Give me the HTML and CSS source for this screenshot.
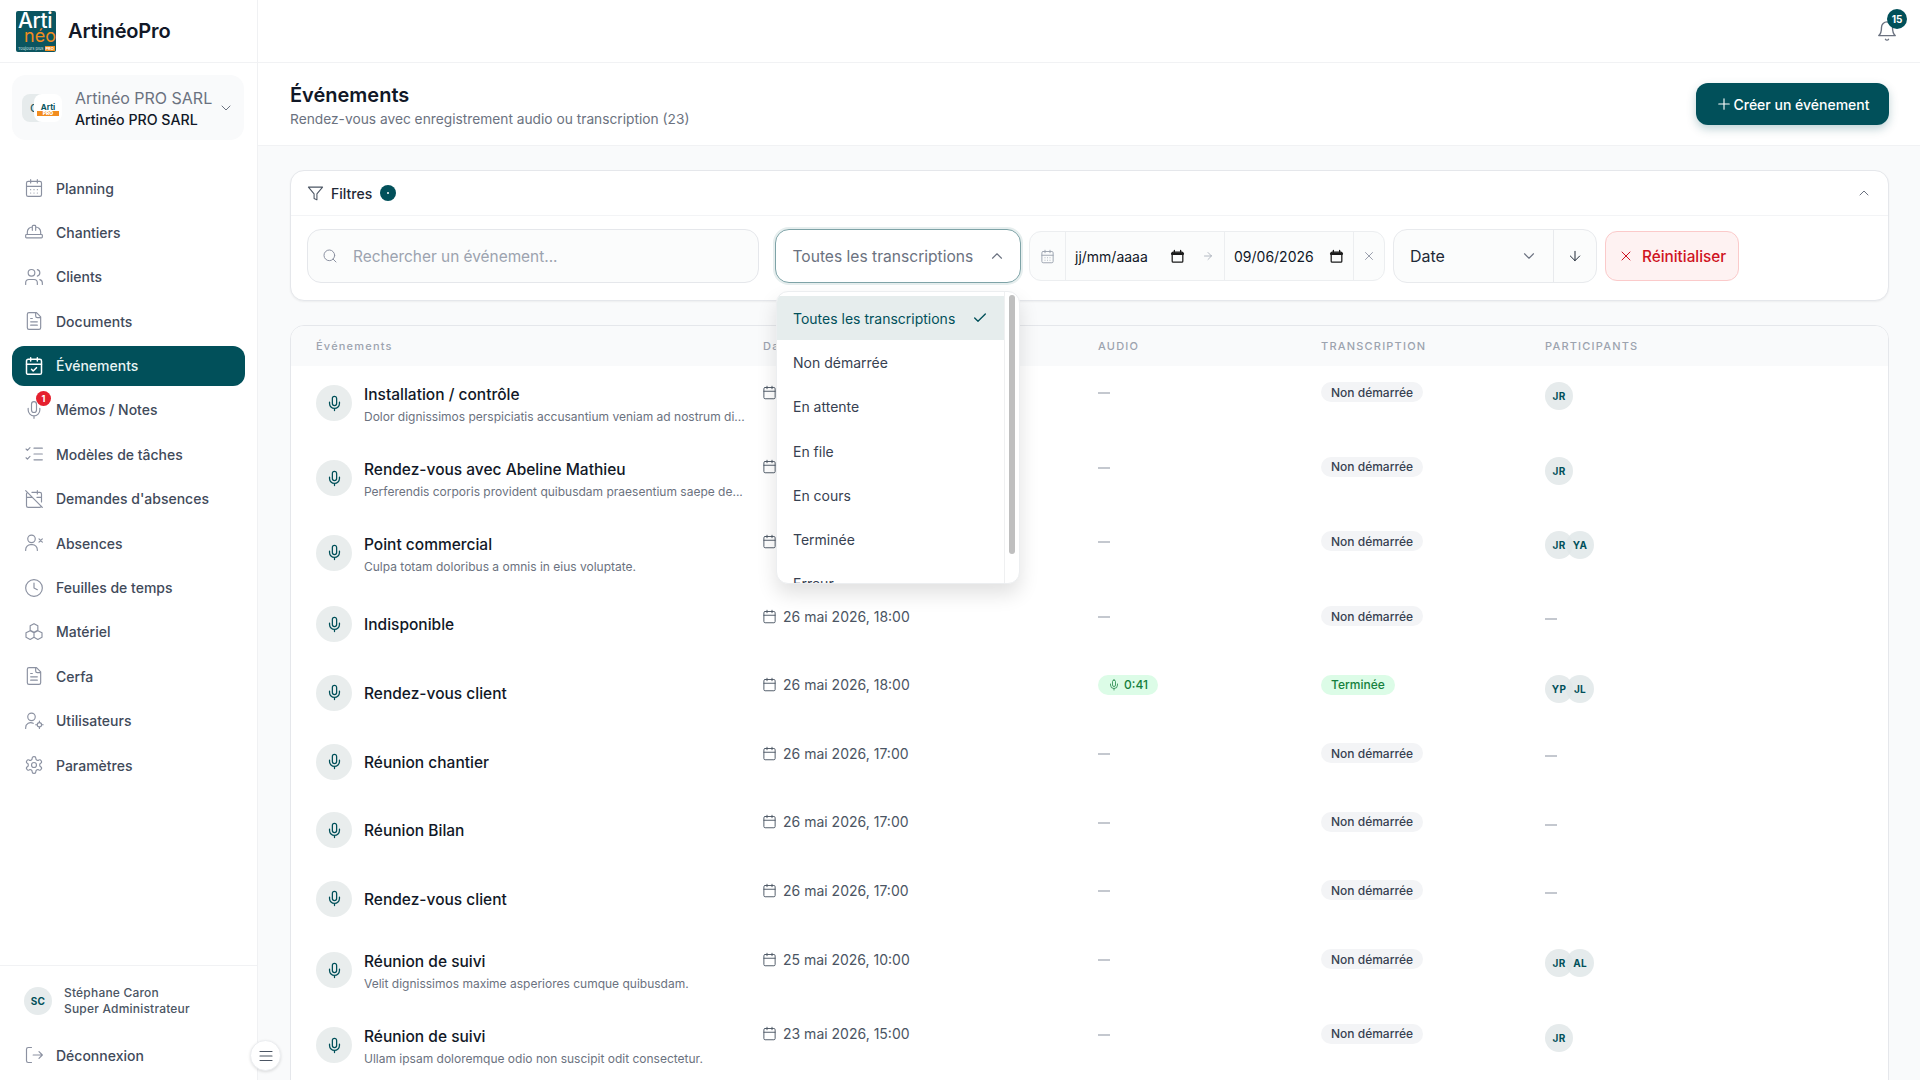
FILE: index.html
```html
<!DOCTYPE html>
<html lang="fr">
<head>
  <meta charset="UTF-8">
  <title>ArtinéoPro - Événements</title>
  <link rel="stylesheet" href="styles.css">
</head>
<body>
  <!-- icon sprite -->
  <svg class="sprite" xmlns="http://www.w3.org/2000/svg">
    <symbol id="i-calendar" viewBox="0 0 24 24"><rect x="3" y="4" width="18" height="18" rx="2"/><path d="M16 2v4M8 2v4M3 10h18"/></symbol>
    <symbol id="i-calendar-days" viewBox="0 0 24 24"><rect x="3" y="4" width="18" height="18" rx="2"/><path d="M16 2v4M8 2v4M3 10h18M8 14h.01M12 14h.01M16 14h.01M8 18h.01M12 18h.01M16 18h.01"/></symbol>
    <symbol id="i-calendar-check" viewBox="0 0 24 24"><rect x="3" y="4" width="18" height="18" rx="2"/><path d="M16 2v4M8 2v4M3 10h18M9 16l2 2 4-4"/></symbol>
    <symbol id="i-calendar-off" viewBox="0 0 24 24"><path d="M4.2 4.2A2 2 0 0 0 3 6v14a2 2 0 0 0 2 2h14a2 2 0 0 0 1.82-1.18M21 15.5V6a2 2 0 0 0-2-2H9.5M16 2v4M3 10h7M21 10h-5.5M2 2l20 20"/></symbol>
    <symbol id="i-helmet" viewBox="0 0 24 24"><path d="M10 10V5a1 1 0 0 1 1-1h2a1 1 0 0 1 1 1v5M14 6a6 6 0 0 1 6 6v3M4 15v-3a6 6 0 0 1 6-6"/><rect x="2" y="15" width="20" height="4" rx="1"/></symbol>
    <symbol id="i-users" viewBox="0 0 24 24"><circle cx="9" cy="7" r="4"/><path d="M2 21v-2a4 4 0 0 1 4-4h6a4 4 0 0 1 4 4v2M16 3.13a4 4 0 0 1 0 7.75M22 21v-2a4 4 0 0 0-3-3.87"/></symbol>
    <symbol id="i-file" viewBox="0 0 24 24"><path d="M15 2H6a2 2 0 0 0-2 2v16a2 2 0 0 0 2 2h12a2 2 0 0 0 2-2V7ZM14 2v4a2 2 0 0 0 2 2h4M10 9H8M16 13H8M16 17H8"/></symbol>
    <symbol id="i-mic" viewBox="0 0 24 24"><path d="M12 2a3 3 0 0 0-3 3v7a3 3 0 0 0 6 0V5a3 3 0 0 0-3-3ZM19 10v2a7 7 0 0 1-14 0v-2M12 19v3"/></symbol>
    <symbol id="i-tasks" viewBox="0 0 24 24"><path d="M2.5 6l1.6 1.6L7.2 4.4M2.5 16.5l1.6 1.6 3.1-3.2M12 5h10M12 12h10M12 19h10"/></symbol>
    <symbol id="i-user-x" viewBox="0 0 24 24"><circle cx="9" cy="7" r="4.5"/><path d="M2 21v-1a6 6 0 0 1 6-6h2a6 6 0 0 1 6 6v1M18 7l4 4M22 7l-4 4"/></symbol>
    <symbol id="i-clock" viewBox="0 0 24 24"><circle cx="12" cy="12" r="10"/><path d="M12 6v6l4 2"/></symbol>
    <symbol id="i-boxes" viewBox="0 0 24 24"><path d="M12 2l4.6 2.6v5.2L12 12.4 7.4 9.8V4.6ZM7.4 10.4l4.6 2.6v5.4L7.4 21 2.4 18.4V13ZM16.6 10.4L21.6 13v5.4L16.6 21 12 18.4V13Z"/></symbol>
    <symbol id="i-user-cog" viewBox="0 0 24 24"><circle cx="9" cy="7" r="4.5"/><path d="M2 21v-1a6 6 0 0 1 9-5.2"/><circle cx="18.5" cy="16.5" r="2.6"/><path d="M18.5 12v1.4M18.5 19.6V21M14 16.5h1.4M21.6 16.5H23"/></symbol>
    <symbol id="i-settings" viewBox="0 0 24 24"><path d="M12.22 2h-.44a2 2 0 0 0-2 2v.18a2 2 0 0 1-1 1.73l-.43.25a2 2 0 0 1-2 0l-.15-.08a2 2 0 0 0-2.73.73l-.22.38a2 2 0 0 0 .73 2.73l.15.1a2 2 0 0 1 1 1.72v.51a2 2 0 0 1-1 1.74l-.15.09a2 2 0 0 0-.73 2.73l.22.38a2 2 0 0 0 2.73.73l.15-.08a2 2 0 0 1 2 0l.43.25a2 2 0 0 1 1 1.73V20a2 2 0 0 0 2 2h.44a2 2 0 0 0 2-2v-.18a2 2 0 0 1 1-1.73l.43-.25a2 2 0 0 1 2 0l.15.08a2 2 0 0 0 2.73-.73l.22-.39a2 2 0 0 0-.73-2.73l-.15-.08a2 2 0 0 1-1-1.74v-.5a2 2 0 0 1 1-1.74l.15-.09a2 2 0 0 0 .73-2.73l-.22-.38a2 2 0 0 0-2.73-.73l-.15.08a2 2 0 0 1-2 0l-.43-.25a2 2 0 0 1-1-1.73V4a2 2 0 0 0-2-2z"/><circle cx="12" cy="12" r="3"/></symbol>
    <symbol id="i-logout" viewBox="0 0 24 24"><path d="M9 21H5a2 2 0 0 1-2-2V5a2 2 0 0 1 2-2h4M11 12h11M18 8l4 4-4 4"/></symbol>
    <symbol id="i-bell" viewBox="0 0 24 24"><path d="M6 8a6 6 0 0 1 12 0c0 7 3 9 3 9H3s3-2 3-9M10.3 21a1.94 1.94 0 0 0 3.4 0"/></symbol>
    <symbol id="i-filter" viewBox="0 0 24 24"><path d="M22 3H2l8 9.46V19l4 2v-8.54Z"/></symbol>
    <symbol id="i-search" viewBox="0 0 24 24"><circle cx="11" cy="11" r="8"/><path d="M21 21l-4.3-4.3"/></symbol>
    <symbol id="i-chevron-down" viewBox="0 0 24 24"><path d="M6 9l6 6 6-6"/></symbol>
    <symbol id="i-chevron-up" viewBox="0 0 24 24"><path d="M18 15l-6-6-6 6"/></symbol>
    <symbol id="i-x" viewBox="0 0 24 24"><path d="M18 6L6 18M6 6l12 12"/></symbol>
    <symbol id="i-plus" viewBox="0 0 24 24"><path d="M5 12h14M12 5v14"/></symbol>
    <symbol id="i-arrow-right" viewBox="0 0 24 24"><path d="M5 12h14M12 5l7 7-7 7"/></symbol>
    <symbol id="i-arrow-down" viewBox="0 0 24 24"><path d="M12 5v14M19 12l-7 7-7-7"/></symbol>
    <symbol id="i-check" viewBox="0 0 24 24"><path d="M20 6L9 17l-5-5"/></symbol>
    <symbol id="i-menu" viewBox="0 0 24 24"><path d="M4 6h16M4 12h16M4 18h16"/></symbol>
    <symbol id="i-picker" viewBox="0 0 24 24"><path d="M7 2v3M17 2v3"/><rect x="3.5" y="5" width="17" height="16" rx="1.5"/><path d="M3.5 7.5h17" stroke-width="4"/></symbol>
  </svg>

  <div class="app">
    <!-- Sidebar -->
    <aside class="sidebar">
      <div class="brand">
        <div class="logo">
          <span class="logo-arti">Arti</span>
          <span class="logo-neo">néo</span>
          <span class="logo-foot">Toujours plus <b>PRO</b></span>
        </div>
        <span class="brand-name">ArtinéoPro</span>
      </div>

      <div class="company">
        <div class="company-logos">
          <span class="tile tile-back">d</span>
          <span class="tile tile-front"><i>Arti</i><b>PRO</b></span>
        </div>
        <div class="company-text">
          <div class="company-top">Artinéo PRO SARL</div>
          <div class="company-sub">Artinéo PRO SARL</div>
        </div>
        <svg class="icon company-chev"><use href="#i-chevron-down"/></svg>
      </div>

      <nav class="nav">
        <a class="nav-item"><svg class="icon"><use href="#i-calendar-days"/></svg>Planning</a>
        <a class="nav-item"><svg class="icon"><use href="#i-helmet"/></svg>Chantiers</a>
        <a class="nav-item"><svg class="icon"><use href="#i-users"/></svg>Clients</a>
        <a class="nav-item"><svg class="icon"><use href="#i-file"/></svg>Documents</a>
        <a class="nav-item active"><svg class="icon"><use href="#i-calendar-check"/></svg>Événements</a>
        <a class="nav-item"><span class="nav-icon"><svg class="icon"><use href="#i-mic"/></svg><span class="nav-badge">1</span></span>Mémos / Notes</a>
        <a class="nav-item"><svg class="icon"><use href="#i-tasks"/></svg>Modèles de tâches</a>
        <a class="nav-item"><svg class="icon"><use href="#i-calendar-off"/></svg>Demandes d'absences</a>
        <a class="nav-item"><svg class="icon"><use href="#i-user-x"/></svg>Absences</a>
        <a class="nav-item"><svg class="icon"><use href="#i-clock"/></svg>Feuilles de temps</a>
        <a class="nav-item"><svg class="icon"><use href="#i-boxes"/></svg>Matériel</a>
        <a class="nav-item"><svg class="icon"><use href="#i-file"/></svg>Cerfa</a>
        <a class="nav-item"><svg class="icon"><use href="#i-user-cog"/></svg>Utilisateurs</a>
        <a class="nav-item"><svg class="icon"><use href="#i-settings"/></svg>Paramètres</a>
      </nav>

      <div class="side-foot">
        <div class="me">
          <span class="avatar">SC</span>
          <div class="me-text">
            <div>Stéphane Caron</div>
            <div>Super Administrateur</div>
          </div>
        </div>
        <a class="nav-item"><svg class="icon"><use href="#i-logout"/></svg>Déconnexion</a>
      </div>
      <button class="collapse"><svg class="icon"><use href="#i-menu"/></svg></button>
    </aside>

    <!-- Main -->
    <div class="main">
      <header class="topbar">
        <div class="bell">
          <svg class="icon"><use href="#i-bell"/></svg>
          <span class="bell-badge">15</span>
        </div>
      </header>

      <section class="page-head">
        <div>
          <h1 class="page-title">Événements</h1>
          <p class="page-sub">Rendez-vous avec enregistrement audio ou transcription (23)</p>
        </div>
        <button class="btn-create"><svg class="icon"><use href="#i-plus"/></svg>Créer un événement</button>
      </section>

      <div class="content">
        <section class="filters">
          <div class="filters-head">
            <svg class="icon filter-icon"><use href="#i-filter"/></svg>
            <span class="filters-label">Filtres</span>
            <span class="filters-dot"></span>
            <svg class="icon filters-chev"><use href="#i-chevron-up"/></svg>
          </div>
          <div class="filters-row">
            <div class="search">
              <svg class="icon"><use href="#i-search"/></svg>
              <span>Rechercher un événement...</span>
            </div>

            <div class="select-wrap">
              <div class="select-open">
                <span>Toutes les transcriptions</span>
                <svg class="icon"><use href="#i-chevron-up"/></svg>
              </div>
              <div class="dropdown">
                <ul class="dropdown-list">
                  <li class="option selected">Toutes les transcriptions<svg class="icon"><use href="#i-check"/></svg></li>
                  <li class="option">Non démarrée</li>
                  <li class="option">En attente</li>
                  <li class="option">En file</li>
                  <li class="option">En cours</li>
                  <li class="option">Terminée</li>
                  <li class="option">Erreur</li>
                </ul>
                <div class="scrolltrack"><div class="scrollthumb"></div></div>
              </div>
            </div>

            <div class="dates">
              <span class="dates-icon"><svg class="icon"><use href="#i-calendar-days"/></svg></span>
              <span class="date-field date-from">jj/mm/aaaa<svg class="icon picker"><use href="#i-picker"/></svg><svg class="icon date-arrow"><use href="#i-arrow-right"/></svg></span>
              <span class="date-field date-to">09/06/2026<svg class="icon picker"><use href="#i-picker"/></svg></span>
              <span class="dates-clear"><svg class="icon"><use href="#i-x"/></svg></span>
            </div>

            <div class="sort">
              <span class="sort-field">Date<svg class="icon"><use href="#i-chevron-down"/></svg></span>
              <span class="sort-dir"><svg class="icon"><use href="#i-arrow-down"/></svg></span>
            </div>

            <button class="btn-reset"><svg class="icon"><use href="#i-x"/></svg>Réinitialiser</button>
          </div>
        </section>

        <section class="table-card">
          <table class="events">
            <colgroup>
              <col class="col-event"><col class="col-date"><col class="col-audio"><col class="col-trans"><col>
            </colgroup>
            <thead>
              <tr>
                <th class="th-plain">Événements</th>
                <th class="th-plain">Date</th>
                <th>Audio</th>
                <th>Transcription</th>
                <th>Participants</th>
              </tr>
            </thead>
            <tbody>
              <tr class="has-sub">
                <td><div class="ev"><span class="ev-mic"><svg class="icon"><use href="#i-mic"/></svg></span><div class="ev-text"><div class="ev-title">Installation / contrôle</div><div class="ev-sub">Dolor dignissimos perspiciatis accusantium veniam ad nostrum di...</div></div></div></td>
                <td><span class="when"><svg class="icon"><use href="#i-calendar"/></svg>27 mai 2026, 09:00</span></td>
                <td><span class="dash"></span></td>
                <td><span class="pill">Non démarrée</span></td>
                <td><div class="people"><span class="avatar">JR</span></div></td>
              </tr>
              <tr class="has-sub">
                <td><div class="ev"><span class="ev-mic"><svg class="icon"><use href="#i-mic"/></svg></span><div class="ev-text"><div class="ev-title">Rendez-vous avec Abeline Mathieu</div><div class="ev-sub">Perferendis corporis provident quibusdam praesentium saepe de...</div></div></div></td>
                <td><span class="when"><svg class="icon"><use href="#i-calendar"/></svg>27 mai 2026, 08:00</span></td>
                <td><span class="dash"></span></td>
                <td><span class="pill">Non démarrée</span></td>
                <td><div class="people"><span class="avatar">JR</span></div></td>
              </tr>
              <tr class="has-sub">
                <td><div class="ev"><span class="ev-mic"><svg class="icon"><use href="#i-mic"/></svg></span><div class="ev-text"><div class="ev-title">Point commercial</div><div class="ev-sub">Culpa totam doloribus a omnis in eius voluptate.</div></div></div></td>
                <td><span class="when"><svg class="icon"><use href="#i-calendar"/></svg>26 mai 2026, 18:00</span></td>
                <td><span class="dash"></span></td>
                <td><span class="pill">Non démarrée</span></td>
                <td><div class="people"><span class="avatar">JR</span><span class="avatar">YA</span></div></td>
              </tr>
              <tr>
                <td><div class="ev"><span class="ev-mic"><svg class="icon"><use href="#i-mic"/></svg></span><div class="ev-text"><div class="ev-title">Indisponible</div></div></div></td>
                <td><span class="when"><svg class="icon"><use href="#i-calendar"/></svg>26 mai 2026, 18:00</span></td>
                <td><span class="dash"></span></td>
                <td><span class="pill">Non démarrée</span></td>
                <td><div class="people"><span class="dash"></span></div></td>
              </tr>
              <tr>
                <td><div class="ev"><span class="ev-mic"><svg class="icon"><use href="#i-mic"/></svg></span><div class="ev-text"><div class="ev-title">Rendez-vous client</div></div></div></td>
                <td><span class="when"><svg class="icon"><use href="#i-calendar"/></svg>26 mai 2026, 18:00</span></td>
                <td><span class="pill pill-green"><svg class="icon"><use href="#i-mic"/></svg>0:41</span></td>
                <td><span class="pill pill-green">Terminée</span></td>
                <td><div class="people"><span class="avatar">YP</span><span class="avatar">JL</span></div></td>
              </tr>
              <tr>
                <td><div class="ev"><span class="ev-mic"><svg class="icon"><use href="#i-mic"/></svg></span><div class="ev-text"><div class="ev-title">Réunion chantier</div></div></div></td>
                <td><span class="when"><svg class="icon"><use href="#i-calendar"/></svg>26 mai 2026, 17:00</span></td>
                <td><span class="dash"></span></td>
                <td><span class="pill">Non démarrée</span></td>
                <td><div class="people"><span class="dash"></span></div></td>
              </tr>
              <tr>
                <td><div class="ev"><span class="ev-mic"><svg class="icon"><use href="#i-mic"/></svg></span><div class="ev-text"><div class="ev-title">Réunion Bilan</div></div></div></td>
                <td><span class="when"><svg class="icon"><use href="#i-calendar"/></svg>26 mai 2026, 17:00</span></td>
                <td><span class="dash"></span></td>
                <td><span class="pill">Non démarrée</span></td>
                <td><div class="people"><span class="dash"></span></div></td>
              </tr>
              <tr>
                <td><div class="ev"><span class="ev-mic"><svg class="icon"><use href="#i-mic"/></svg></span><div class="ev-text"><div class="ev-title">Rendez-vous client</div></div></div></td>
                <td><span class="when"><svg class="icon"><use href="#i-calendar"/></svg>26 mai 2026, 17:00</span></td>
                <td><span class="dash"></span></td>
                <td><span class="pill">Non démarrée</span></td>
                <td><div class="people"><span class="dash"></span></div></td>
              </tr>
              <tr class="has-sub">
                <td><div class="ev"><span class="ev-mic"><svg class="icon"><use href="#i-mic"/></svg></span><div class="ev-text"><div class="ev-title">Réunion de suivi</div><div class="ev-sub">Velit dignissimos maxime asperiores cumque quibusdam.</div></div></div></td>
                <td><span class="when"><svg class="icon"><use href="#i-calendar"/></svg>25 mai 2026, 10:00</span></td>
                <td><span class="dash"></span></td>
                <td><span class="pill">Non démarrée</span></td>
                <td><div class="people"><span class="avatar">JR</span><span class="avatar">AL</span></div></td>
              </tr>
              <tr class="has-sub">
                <td><div class="ev"><span class="ev-mic"><svg class="icon"><use href="#i-mic"/></svg></span><div class="ev-text"><div class="ev-title">Réunion de suivi</div><div class="ev-sub">Ullam ipsam doloremque odio non suscipit odit consectetur.</div></div></div></td>
                <td><span class="when"><svg class="icon"><use href="#i-calendar"/></svg>23 mai 2026, 15:00</span></td>
                <td><span class="dash"></span></td>
                <td><span class="pill">Non démarrée</span></td>
                <td><div class="people"><span class="avatar">JR</span></div></td>
              </tr>
            </tbody>
          </table>
        </section>
      </div>
    </div>
  </div>
</body>
</html>
```

FILE: styles.css
```css
* {
  box-sizing: border-box;
}

html, body {
  margin: 0;
  height: 100%;
  overflow: hidden;
}

body {
  font-family: Inter, "Liberation Sans", sans-serif;
  color: #111827;
  background: #fff;
}

.sprite {
  display: none;
}

.icon {
  width: 20px;
  height: 20px;
  fill: none;
  stroke: currentColor;
  stroke-width: 1.5;
  stroke-linecap: round;
  stroke-linejoin: round;
  flex-shrink: 0;
}

.app {
  display: grid;
  grid-template-columns: 258px 1fr;
  height: 1080px;
}

/* Sidebar */
.sidebar {
  position: relative;
  display: flex;
  flex-direction: column;
  border-right: 1px solid #f0f1f3;
  background: #fff;
  z-index: 2;
}

.brand {
  display: flex;
  align-items: center;
  gap: 12px;
  height: 63px;
  padding-left: 16px;
  border-bottom: 1px solid #f1f2f4;
}

.logo {
  position: relative;
  width: 40px;
  height: 41px;
  border-radius: 2px;
  background: #0b5560;
  font-weight: 500;
}

.logo-arti {
  position: absolute;
  left: 2px;
  top: 1.5px;
  font-size: 21px;
  line-height: 18px;
  letter-spacing: -0.4px;
  color: #fff;
}

.logo-neo {
  position: absolute;
  left: 8px;
  top: 19.5px;
  font-size: 18px;
  line-height: 12px;
  font-weight: 400;
  color: #f28c1e;
}

.logo-foot {
  position: absolute;
  left: 2px;
  bottom: 1px;
  font-size: 4px;
  line-height: 5px;
  font-weight: 400;
  color: #d5e3e5;
  white-space: nowrap;
}

.logo-foot b {
  background: #f28c1e;
  color: #fff;
  padding: 0 1px;
}

.brand-name {
  font-size: 20px;
  font-weight: 600;
  color: #111827;
  letter-spacing: -0.15px;
}

.company {
  display: flex;
  align-items: center;
  height: 65px;
  margin: 12px 13px 0 12px;
  padding: 0 10px;
  border-radius: 14px;
  background: #f9fafb;
}

.company-logos {
  position: relative;
  width: 42px;
  height: 28px;
  margin-right: 11px;
  flex-shrink: 0;
}

.tile {
  position: absolute;
  top: 0;
  width: 28px;
  height: 28px;
  border-radius: 8px;
}

.tile-back {
  left: 0;
  background: #e6ebec;
  color: #285a60;
  font-size: 14px;
  padding: 4px 0 0 8px;
}

.tile-front {
  left: 12px;
  background: #fff;
  font-size: 8px;
  font-weight: 700;
  text-align: center;
  line-height: 1;
  padding-top: 9px;
}

.tile-front i {
  display: block;
  font-style: normal;
  color: #0b5560;
}

.tile-front b {
  display: block;
  font-size: 5px;
  background: #f28c1e;
  color: #fff;
  margin: 0 3px;
}

.company-text {
  flex: 1;
  min-width: 0;
  padding-top: 2px;
  white-space: nowrap;
}

.company-top {
  font-size: 16px;
  line-height: 21px;
  color: #6b7280;
}

.company-sub {
  font-size: 14.2px;
  line-height: 21px;
  font-weight: 500;
  color: #111827;
}

.company-chev {
  width: 16px;
  height: 16px;
  color: #6b7280;
}

.nav {
  display: flex;
  flex-direction: column;
  gap: 4.4px;
  margin-top: 28px;
  padding: 0 12px;
}

.nav-item {
  display: flex;
  align-items: center;
  gap: 12px;
  height: 40px;
  padding-left: 12px;
  border-radius: 12px;
  font-size: 14px;
  font-weight: 500;
  color: #414a5a;
}

.nav-item .icon {
  width: 20px;
  height: 20px;
  color: #8b91a1;
  stroke-width: 1.4;
}

.nav-item.active {
  background: #01505a;
  color: #e8f4f4;
}

.nav-item.active .icon {
  color: #fff;
  stroke-width: 1.8;
}

.nav-icon {
  position: relative;
  display: flex;
}

.nav-badge {
  position: absolute;
  top: -9px;
  right: -7px;
  width: 15px;
  height: 15px;
  border-radius: 50%;
  background: #e5202e;
  color: #fff;
  font-size: 9px;
  font-weight: 700;
  line-height: 15px;
  text-align: center;
}

.side-foot {
  margin-top: auto;
  padding: 0 12px;
  border-top: 1px solid #f1f2f4;
  height: 118px;
}

.side-foot .nav-item {
  margin-top: 20px;
}

.me {
  display: flex;
  align-items: center;
  gap: 12px;
  margin-top: 21px;
  padding-left: 12px;
  height: 28px;
}

.me-text {
  font-size: 12px;
  line-height: 16px;
  font-weight: 500;
  color: #4b5563;
  letter-spacing: 0.2px;
}

.avatar {
  display: flex;
  align-items: center;
  justify-content: center;
  width: 28px;
  height: 28px;
  border-radius: 50%;
  background: #e6ebec;
  color: #01505a;
  font-size: 10px;
  font-weight: 700;
  letter-spacing: 0.3px;
  flex-shrink: 0;
}

.collapse {
  position: absolute;
  right: -24px;
  bottom: 12px;
  display: flex;
  align-items: center;
  justify-content: center;
  width: 31px;
  height: 31px;
  padding: 0;
  border: 1px solid #eceef1;
  border-radius: 50%;
  background: #fff;
  color: #4b5563;
  box-shadow: 0 1px 3px rgba(0, 0, 0, 0.12);
}

.collapse .icon {
  width: 18px;
  height: 18px;
}

/* Main */
.main {
  display: flex;
  flex-direction: column;
  min-width: 0;
  background: #f9fafb;
}

.topbar {
  display: flex;
  justify-content: flex-end;
  align-items: center;
  height: 63px;
  padding-right: 22px;
  background: #fff;
  border-bottom: 1px solid #f1f2f4;
}

.bell {
  position: relative;
  display: flex;
  margin-top: -1px;
  color: #6b7280;
}

.bell .icon {
  width: 22px;
  height: 22px;
}

.bell-badge {
  position: absolute;
  top: -11px;
  right: -9px;
  width: 20px;
  height: 20px;
  border-radius: 50%;
  background: #01505a;
  color: #fff;
  font-size: 10px;
  font-weight: 700;
  line-height: 20px;
  text-align: center;
}

.page-head {
  display: flex;
  justify-content: space-between;
  align-items: center;
  height: 83px;
  padding: 0 31px 0 32px;
  background: #fff;
  border-bottom: 1px solid #f1f2f4;
}

.page-title {
  margin: 2px 0 0;
  font-size: 20px;
  line-height: 28px;
  font-weight: 600;
  color: #111827;
}

.page-sub {
  margin: 0;
  font-size: 13.75px;
  line-height: 20px;
  color: #6b7280;
}

.btn-create {
  display: flex;
  align-items: center;
  justify-content: center;
  gap: 0;
  width: 193px;
  height: 42px;
  border: 0;
  border-radius: 12px;
  background: #01505a;
  color: #fff;
  font: 500 14px Inter, sans-serif;
  box-shadow: 0 4px 10px rgba(1, 80, 90, 0.25);
}

.btn-create .icon {
  width: 18px;
  height: 18px;
}

.content {
  flex: 1;
  min-height: 0;
  padding: 24px 31px 0 32px;
}

/* Filters */
.filters {
  height: 131px;
  border: 1px solid #e5e7eb;
  border-radius: 14px;
  background: #fff;
  box-shadow: 0 1px 2px rgba(0, 0, 0, 0.05);
}

.filters-head {
  display: flex;
  align-items: center;
  height: 45px;
  padding: 0 16px;
  border-bottom: 1px solid #f3f4f6;
}

.filter-icon {
  width: 17px;
  height: 17px;
  color: #4b5563;
}

.filters-label {
  margin-left: 7px;
  font-size: 14px;
  font-weight: 500;
  color: #1f2937;
}

.filters-dot {
  position: relative;
  width: 16px;
  height: 16px;
  margin-left: 8px;
  border-radius: 50%;
  background: #01505a;
}

.filters-dot::after {
  content: "";
  position: absolute;
  left: 7px;
  top: 7px;
  width: 2px;
  height: 2px;
  border-radius: 50%;
  background: #fff;
}

.filters-chev {
  width: 16px;
  height: 16px;
  margin-left: auto;
  color: #6b7280;
}

.filters-row {
  display: flex;
  align-items: center;
  gap: 8px;
  padding: 13px 16px 0;
}

.search {
  display: flex;
  align-items: center;
  gap: 15px;
  width: 452px;
  height: 54px;
  padding-left: 14px;
  margin-right: 8px;
  border: 1px solid #e5e7eb;
  border-radius: 14px;
  background: #fbfcfc;
  font-size: 15.4px;
  color: #9ca3af;
}

.search .icon {
  width: 16px;
  height: 16px;
  color: #8b91a1;
}

.select-wrap {
  position: relative;
}

.select-open {
  display: flex;
  align-items: center;
  justify-content: space-between;
  width: 246px;
  height: 54px;
  padding: 0 14px 0 16.5px;
  border: 1px solid #7ea3a7;
  border-radius: 14px;
  background: #fff;
  box-shadow: 0 0 0 2px #e6eeee;
  font-size: 15.6px;
  color: #6b7280;
}

.select-open .icon {
  width: 18px;
  height: 18px;
}

.dropdown {
  position: absolute;
  left: 1px;
  top: 62px;
  display: flex;
  width: 244px;
  height: 293px;
  border: 1px solid #eceef0;
  border-radius: 12px;
  background: #fff;
  overflow: hidden;
  box-shadow: 0 10px 20px rgba(0, 0, 0, 0.12);
  z-index: 5;
}

.dropdown-list {
  flex: 1;
  margin: 4px 0 0;
  padding: 0;
  list-style: none;
  font-size: 14px;
  color: #374151;
}

.option {
  display: flex;
  align-items: center;
  justify-content: space-between;
  height: 44.3px;
  padding: 0 16px;
}

.option.selected {
  background: #e6eded;
  color: #01505a;
}

.option .icon {
  width: 16px;
  height: 16px;
  stroke-width: 2;
}

.scrolltrack {
  width: 15px;
  padding: 3px 4px 0;
  border-left: 1px solid #eff0f1;
}

.scrollthumb {
  height: 259px;
  border-radius: 4px;
  background: #bfbfbf;
}

.dates {
  display: flex;
  align-items: center;
  width: 356px;
  height: 50px;
  border: 1px solid #eceef0;
  border-radius: 12px;
  background: #fbfcfc;
  font-size: 14px;
  color: #111827;
}

.dates-icon {
  display: flex;
  align-items: center;
  justify-content: center;
  width: 36px;
  height: 100%;
  border-right: 1px solid #eceef0;
  color: #9ca3af;
}

.dates-icon .icon {
  width: 15px;
  height: 15px;
}

.date-field {
  display: flex;
  align-items: center;
  height: 100%;
  padding-left: 9px;
}

.date-from {
  width: 158px;
}

.date-to {
  width: 130px;
  border-left: 1px solid #eceef0;
  border-right: 1px solid #eceef0;
}

.picker {
  width: 15px;
  height: 15px;
  color: #1a1a1a;
  stroke-width: 2;
}

.date-from .picker {
  margin-left: 22px;
}

.date-to .picker {
  margin-left: 15px;
}

.date-arrow {
  width: 12px;
  height: 12px;
  margin-left: 17px;
  color: #9ca3af;
}

.dates-clear {
  display: flex;
  justify-content: center;
  flex: 1;
  color: #8b91a1;
}

.dates-clear .icon {
  width: 14px;
  height: 14px;
}

.sort {
  display: flex;
  width: 204px;
  height: 54px;
  border: 1px solid #e8eaed;
  border-radius: 14px;
  background: #fbfcfc;
  font-size: 16px;
  color: #1f2937;
}

.sort-field {
  display: flex;
  align-items: center;
  justify-content: space-between;
  flex: 1;
  padding: 0 15px 0 16px;
  border-right: 1px solid #e8eaed;
}

.sort-field .icon {
  width: 18px;
  height: 18px;
  color: #6b7280;
}

.sort-dir {
  display: flex;
  align-items: center;
  justify-content: center;
  width: 42px;
}

.sort-dir .icon {
  width: 16px;
  height: 16px;
}

.btn-reset {
  display: flex;
  align-items: center;
  gap: 8px;
  width: 134px;
  height: 50px;
  padding: 0 0 0 12px;
  border: 1px solid #fbcaca;
  border-radius: 12px;
  background: #fef2f2;
  color: #cf1322;
  font: 500 15.3px Inter, sans-serif;
}

.btn-reset .icon {
  width: 16px;
  height: 16px;
}

/* Table */
.table-card {
  margin-top: 24px;
  border: 1px solid #e5e7eb;
  border-radius: 14px 14px 0 0;
  background: #fff;
  overflow: hidden;
}

.events {
  width: 100%;
  border-collapse: collapse;
  table-layout: fixed;
}

.col-event {
  width: 447px;
}

.col-date {
  width: 335px;
}

.col-audio {
  width: 223px;
}

.col-trans {
  width: 224px;
}

.events th {
  height: 40px;
  padding: 0 0 0 25px;
  background: #f9fafb;
  font-size: 11px;
  font-weight: 500;
  text-align: left;
  text-transform: uppercase;
  letter-spacing: 1.2px;
  color: #9ca3af;
}

.events th.th-plain {
  text-transform: none;
}

.events tbody tr {
  height: 68.6px;
}

.events tbody tr.has-sub {
  height: 74.7px;
}

.events td {
  padding: 16px 0 0 25px;
  vertical-align: top;
}

.ev {
  display: flex;
  align-items: center;
  gap: 12px;
  height: 36.6px;
}

.has-sub .ev {
  height: 42.7px;
}

.ev-mic {
  display: flex;
  align-items: center;
  justify-content: center;
  width: 36px;
  height: 36px;
  border-radius: 50%;
  background: #e9eded;
  color: #01505a;
  flex-shrink: 0;
}

.ev-mic .icon {
  width: 17px;
  height: 17px;
  stroke-width: 1.8;
}

.ev-text {
  min-width: 0;
  padding-top: 2px;
}

.ev-title {
  font-size: 15.5px;
  line-height: 24px;
  font-weight: 500;
  color: #111827;
}

.ev-sub {
  margin-top: 2px;
  font-size: 12px;
  line-height: 16px;
  color: #6b7280;
  white-space: nowrap;
}

.when {
  display: flex;
  align-items: center;
  gap: 6px;
  height: 20px;
  margin-left: -1px;
  font-size: 14px;
  color: #4b5563;
}

.when .icon {
  width: 15px;
  height: 15px;
}

.dash {
  display: block;
  width: 12px;
  height: 2px;
  margin-top: 10px;
  background: #c4c8cf;
}

.pill {
  display: inline-flex;
  align-items: center;
  vertical-align: top;
  gap: 4px;
  height: 20px;
  padding: 0 10px;
  border-radius: 10px;
  background: #f3f4f6;
  font-size: 12px;
  font-weight: 500;
  color: #374151;
}

.pill .icon {
  width: 12px;
  height: 12px;
}

.pill-green {
  background: #dcfce7;
  color: #15803d;
}

.people {
  display: flex;
}

.people .avatar + .avatar {
  margin-left: -7px;
  background: rgba(225, 232, 233, 0.85);
}

.people .dash {
  margin-top: 12px;
}
```
